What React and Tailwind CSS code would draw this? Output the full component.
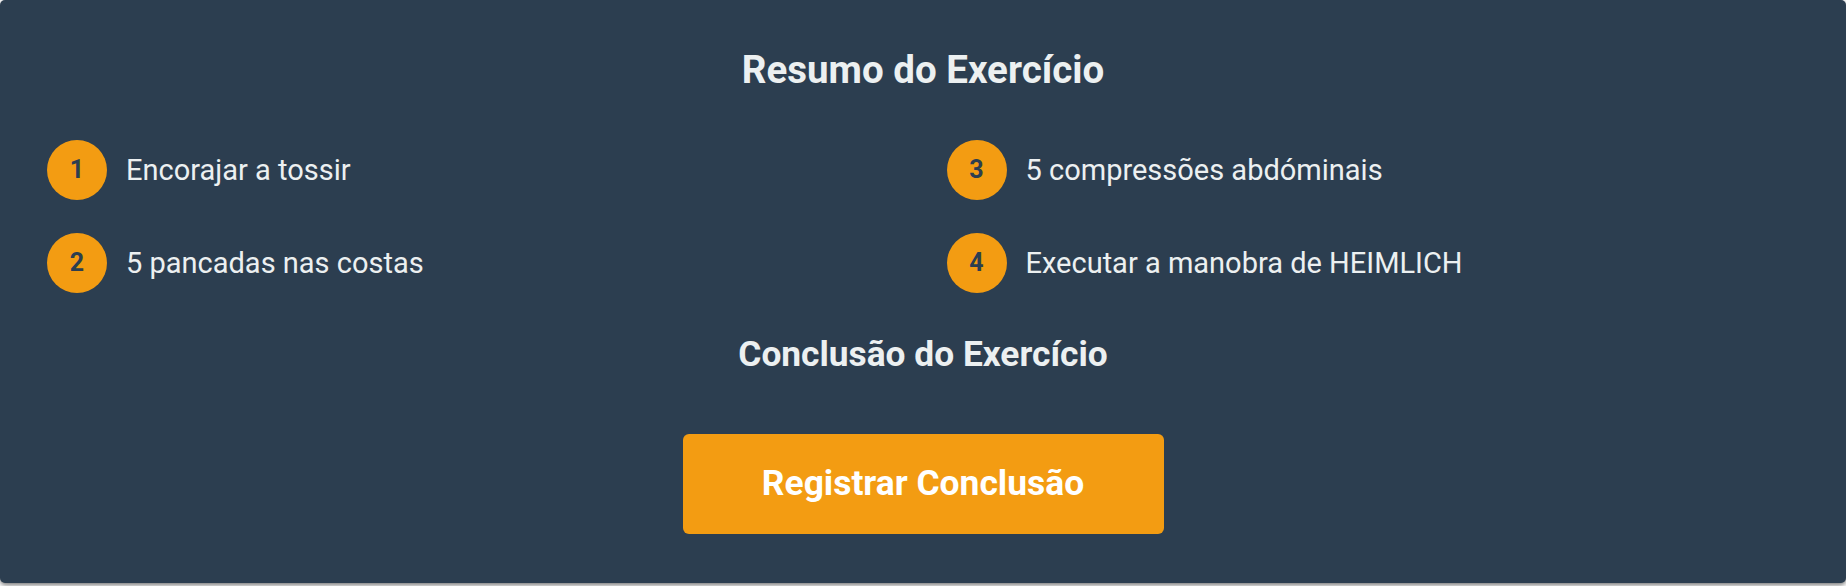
import React from "react";

const steps = [
	{ n: 1, text: "Encorajar a tossir" },
	{ n: 2, text: "5 pancadas nas costas" },
	{ n: 3, text: "5 compressões abdóminais" },
	{ n: 4, text: "Executar a manobra de HEIMLICH" },
];

const Step = ({ n, text }) => (
	<div className="flex items-center gap-[19px]">
		<div className="w-[60px] h-[60px] rounded-full bg-[#f39c12] text-[#2c3e50] flex items-center justify-center text-[25px] font-bold shrink-0">
			{n}
		</div>
		<span className="text-[29px] text-[#ecf0f1] leading-[1.2]">{text}</span>
	</div>
);

export default function App() {
	return (
		<div
			className="min-h-[586px] bg-white"
			style={{ fontFamily: "Roboto, 'Liberation Sans', sans-serif" }}
		>
			<div className="bg-[#2c3e50] rounded-[5px] px-[47px] pt-[47px] pb-[49px] shadow-[0_2px_5px_rgba(0,0,0,0.55)] flex flex-col items-center">
				<h2 className="text-[38.5px] leading-[1.2] font-bold text-[#ecf0f1] mb-[47px]">
					Resumo do Exercício
				</h2>
				<div className="w-full grid grid-cols-2 grid-rows-2 grid-flow-col gap-x-[47px] gap-y-[33px]">
					{steps.map((s) => (
						<Step key={s.n} n={s.n} text={s.text} />
					))}
				</div>
				<h3 className="mt-[40px] mb-[58px] text-[35.3px] leading-[1.2] font-bold text-[#ecf0f1]">
					Conclusão do Exercício
				</h3>
				<button className="w-[481px] h-[100px] rounded-[6px] bg-[#f39c12] text-white text-[35.4px] font-bold flex items-center justify-center">
					Registrar Conclusão
				</button>
			</div>
		</div>
	);
}
